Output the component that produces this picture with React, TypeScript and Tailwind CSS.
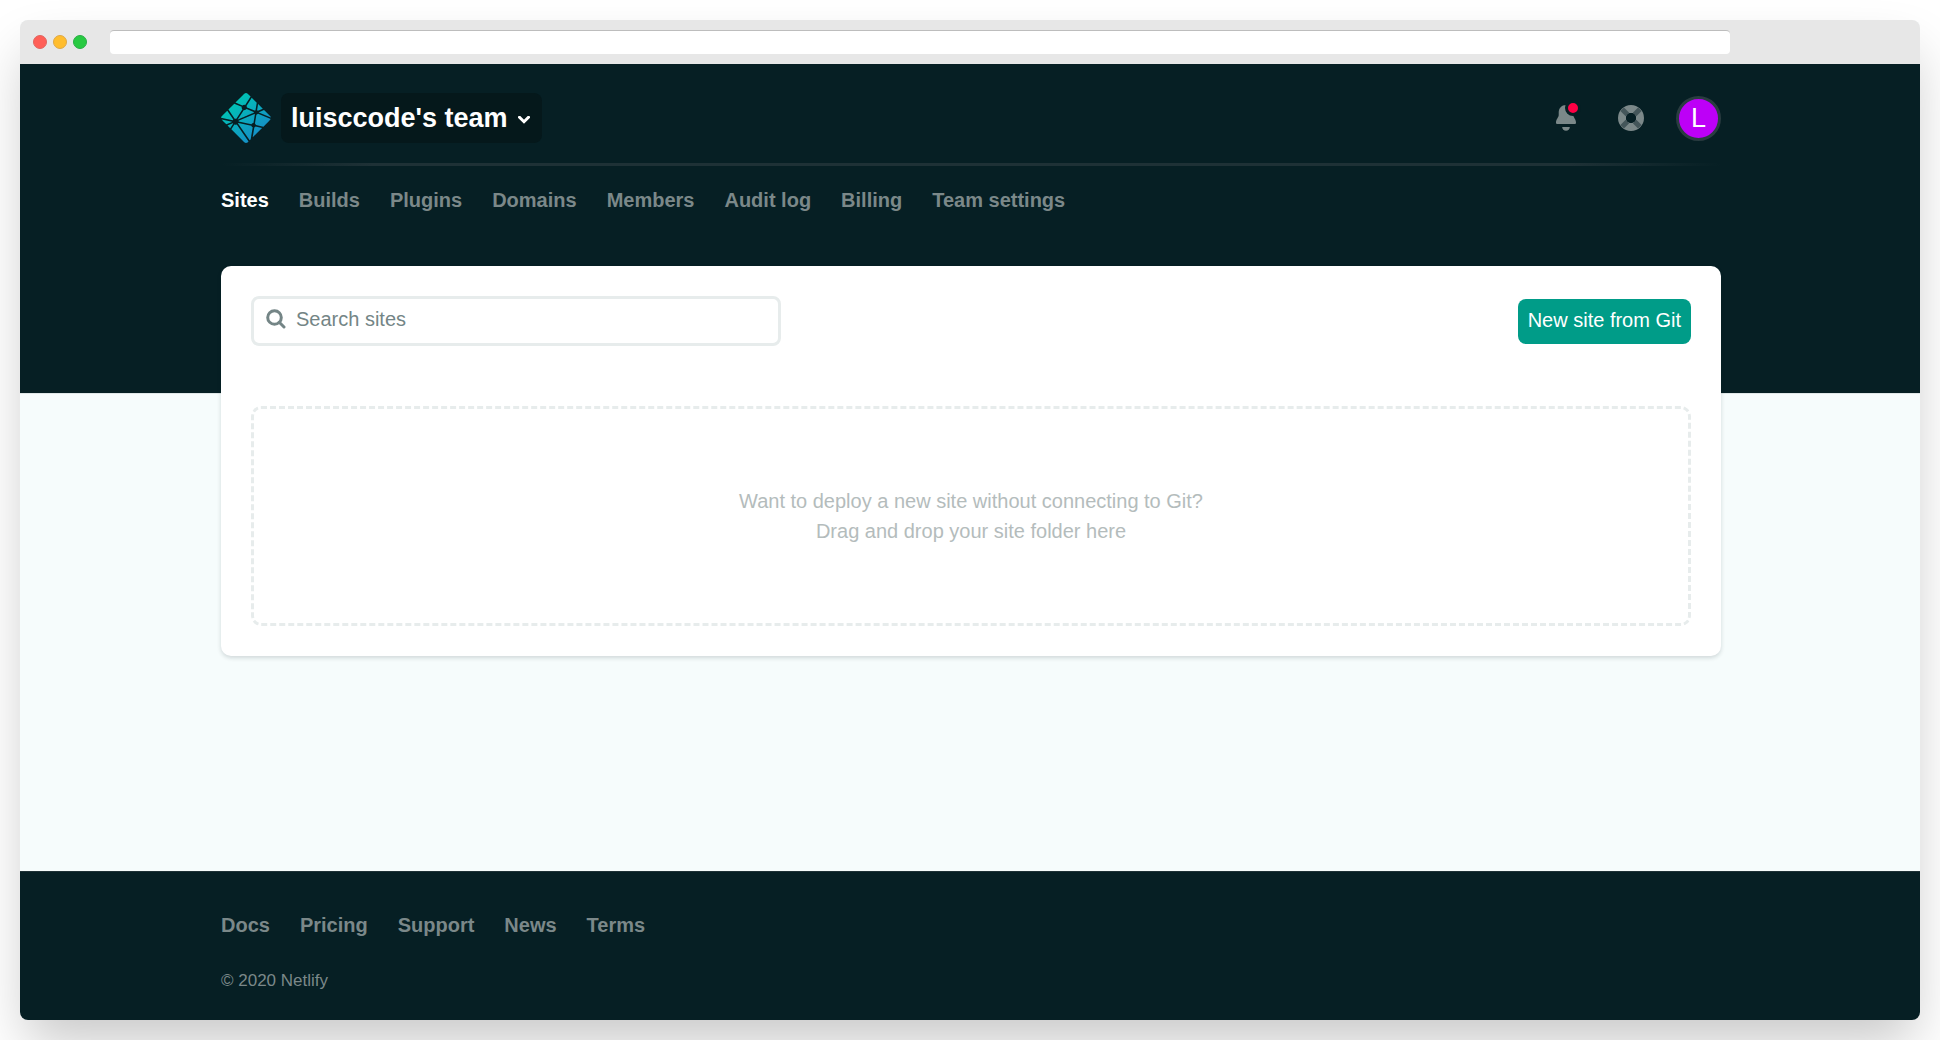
import React from "react";

const LOGO_PATH =
  "M28.589 14.135l-.014-.006c-.008-.003-.016-.006-.023-.013a.11.11 0 0 1-.028-.093l.773-4.726 3.625 3.626-3.77 1.604a.083.083 0 0 1-.033.006h-.015c-.005-.003-.01-.007-.02-.017a1.716 1.716 0 0 0-.495-.381zm5.258-.288l3.876 3.876c.805.806 1.208 1.208 1.355 1.674.022.069.04.138.054.209l-9.263-3.923a.728.728 0 0 0-.015-.006c-.037-.015-.08-.032-.08-.07 0-.038.044-.056.081-.071l.012-.005 3.98-1.684zm5.127 7.003c-.2.376-.59.766-1.25 1.427l-4.37 4.369-5.652-1.177-.03-.006c-.05-.008-.103-.017-.103-.062a1.706 1.706 0 0 0-.655-1.193c-.023-.023-.017-.059-.01-.092 0-.005 0-.01.002-.014l1.063-6.526.004-.022c.006-.05.015-.108.06-.108a1.73 1.73 0 0 0 1.16-.665c.009-.01.015-.021.027-.027.032-.015.07 0 .103.014l9.65 4.082zm-6.625 6.801l-7.186 7.186 1.23-7.56.002-.01c.001-.01.003-.02.006-.029.01-.024.036-.034.061-.044l.012-.005a1.85 1.85 0 0 0 .695-.517c.024-.028.053-.055.09-.06a.09.09 0 0 1 .029 0l5.06 1.04zm-8.707 8.707l-.81.81-8.955-12.942a.424.424 0 0 0-.01-.014c-.014-.019-.029-.038-.026-.06.001-.016.011-.03.022-.042l.01-.013c.027-.04.05-.08.075-.123l.02-.035.003-.003c.014-.024.027-.047.051-.06.021-.01.05-.006.073-.001l9.921 2.046a.164.164 0 0 1 .076.033c.013.013.016.027.019.043a1.757 1.757 0 0 0 1.028 1.175c.028.014.016.045.003.078a.238.238 0 0 0-.015.045c-.125.76-1.197 7.298-1.485 9.063zm-1.692 1.691c-.597.591-.949.904-1.347 1.03a2 2 0 0 1-1.206 0c-.466-.148-.869-.55-1.674-1.356L8.73 28.73l2.349-3.643c.011-.018.022-.034.04-.047.025-.018.061-.01.091 0a2.434 2.434 0 0 0 1.638-.083c.027-.01.054-.017.075.002a.19.19 0 0 1 .028.032L21.95 38.05zM7.863 27.863L5.8 25.8l4.074-1.738a.084.084 0 0 1 .033-.007c.034 0 .054.034.072.065a2.91 2.91 0 0 0 .13.184l.013.016c.012.017.004.034-.008.05l-2.25 3.493zm-2.976-2.976l-2.61-2.61c-.444-.444-.766-.766-.99-1.043l7.936 1.646a.84.84 0 0 0 .03.005c.049.008.103.017.103.063 0 .05-.059.073-.109.092l-.023.01-4.337 1.837zM.831 19.892a2 2 0 0 1 .09-.495c.148-.466.55-.868 1.356-1.674l3.34-3.34a2175.525 2175.525 0 0 0 4.626 6.687c.027.036.057.076.026.106-.146.161-.292.337-.395.528a.16.16 0 0 1-.05.062c-.013.008-.027.005-.042.002H9.78L.831 19.891zm5.68-6.403l4.491-4.491c.422.185 1.958.834 3.332 1.414 1.04.44 1.988.84 2.286.97.03.012.057.024.07.054.008.018.004.041 0 .06a2.003 2.003 0 0 0 .523 1.828c.03.03 0 .073-.026.11l-.014.021-4.56 7.063c-.012.02-.023.037-.043.05-.024.015-.058.008-.086.001a2.274 2.274 0 0 0-.543-.074c-.164 0-.342.03-.522.063h-.001c-.02.003-.038.007-.054-.005a.21.21 0 0 1-.045-.051l-4.808-7.013zm5.398-5.398l5.814-5.814c.805-.805 1.208-1.208 1.674-1.355a2 2 0 0 1 1.206 0c.466.147.869.55 1.674 1.355l1.26 1.26-4.135 6.404a.155.155 0 0 1-.041.048c-.025.017-.06.01-.09 0a2.097 2.097 0 0 0-1.92.37c-.027.028-.067.012-.101-.003-.54-.235-4.74-2.01-5.341-2.265zm12.506-3.676l3.818 3.818-.92 5.698v.015a.135.135 0 0 1-.008.038c-.01.02-.03.024-.05.03a1.83 1.83 0 0 0-.548.273.154.154 0 0 0-.02.017c-.011.012-.022.023-.04.025a.114.114 0 0 1-.043-.007l-5.818-2.472-.011-.005c-.037-.015-.081-.033-.081-.071a2.198 2.198 0 0 0-.31-.915c-.028-.046-.059-.094-.035-.141l4.066-6.303zm-3.932 8.606l5.454 2.31c.03.014.063.027.076.058a.106.106 0 0 1 0 .057c-.016.08-.03.171-.03.263v.153c0 .038-.039.054-.075.069l-.011.004c-.864.369-12.13 5.173-12.147 5.173-.017 0-.035 0-.052-.017-.03-.03 0-.072.027-.11a.76.76 0 0 0 .014-.02l4.482-6.94.008-.012c.026-.042.056-.089.104-.089l.045.007c.102.014.192.027.283.027.68 0 1.31-.331 1.69-.897a.16.16 0 0 1 .034-.04c.027-.02.067-.01.098.004zm-6.246 9.185l12.28-5.237s.018 0 .035.017c.067.067.124.112.179.154l.027.017c.025.014.05.03.052.056 0 .01 0 .016-.002.025L25.756 23.7l-.004.026c-.007.05-.014.107-.061.107a1.729 1.729 0 0 0-1.373.847l-.005.008c-.014.023-.027.045-.05.057-.021.01-.048.006-.07.001l-9.793-2.02c-.01-.002-.152-.519-.163-.52z";

function Logo() {
  return (
    <svg className="size-[50px]" viewBox="0.8 0.8 38.4 38.4" aria-hidden="true">
      <defs>
        <linearGradient id="logo-fill" gradientUnits="userSpaceOnUse" x1="10" y1="8" x2="30" y2="30">
          <stop offset="0" stopColor="#00c2b5" />
          <stop offset="1" stopColor="#1492c6" />
        </linearGradient>
      </defs>
      <path d={LOGO_PATH} fill="url(#logo-fill)" />
    </svg>
  );
}

function ChevronIcon() {
  return (
    <svg className="mt-1 h-2 w-3" viewBox="0 0 12 8" fill="none" stroke="currentColor" strokeWidth="3" aria-hidden="true">
      <path d="M1.5 1.2 6 5.7l4.500-4.500" strokeLinecap="round" />
    </svg>
  );
}

function BellIcon() {
  return (
    <svg className="h-[26px] w-5" viewBox="0 0 20 26" fill="#7b8889" aria-hidden="true">
      <path d="M10 0C5.500 0 2.700 3.200 2.700 7.500V10C2.700 12.500 0 14 0 17.500 0 18.500.500 19 1.500 19h17c1 0 1.500-.500 1.500-1.500 0-3.500-2.700-5-2.700-7.500V7.500C17.300 3.200 14.500 0 10 0z" />
      <path d="M6.200 22h7.600c0 2.200-1.600 3.800-3.800 3.800S6.200 24.200 6.200 22z" />
    </svg>
  );
}

function HelpIcon() {
  return (
    <svg className="size-[26px]" viewBox="-13 -13 26 26" fill="none" aria-hidden="true">
      <circle r="9" stroke="#7b8889" strokeWidth="8" />
      <g stroke="#44565a" strokeWidth="5">
        <path d="M-8.800-8.800-3.600-3.600M8.800-8.800 3.600-3.600M-8.800 8.800-3.600 3.600M8.800 8.800 3.600 3.600" />
      </g>
      <circle r="5" fill="#061f24" />
    </svg>
  );
}

function SearchIcon() {
  return (
    <svg className="size-5 shrink-0" viewBox="0 0 20 20" fill="none" stroke="#748586" strokeWidth="3" aria-hidden="true">
      <circle cx="8.500" cy="8.500" r="6.800" />
      <path d="M13.300 13.300 18 18" strokeLinecap="round" />
    </svg>
  );
}

function Container({ className = "", children }: { className?: string; children: React.ReactNode }) {
  return (
    <div className="pl-0.5">
      <div className={"mx-auto w-full max-w-[1500px] " + className}>{children}</div>
    </div>
  );
}

const tabs = ["Sites", "Builds", "Plugins", "Domains", "Members", "Audit log", "Billing", "Team settings"];
const footerLinks = ["Docs", "Pricing", "Support", "News", "Terms"];

export default function App() {
  return (
    <div className="min-h-screen overflow-hidden bg-white p-5 font-['Liberation_Sans',Arial,sans-serif] text-xl leading-[30px]">
      <div className="flex min-h-[calc(100vh-40px)] flex-col overflow-hidden rounded-lg bg-[#f6fcfc] shadow-[0_28px_54px_-6px_rgba(0,0,0,0.22)]">
        <div className="flex h-11 items-center bg-[#e7e7e7] pr-[190px] pl-[13px]">
          <div className="mr-[23px] flex gap-1.5">
            <span className="size-3.5 rounded-full border border-[#e0655f] bg-[#ff5f57]" />
            <span className="size-3.5 rounded-full border border-[#dfa845] bg-[#ffbd2e]" />
            <span className="size-3.5 rounded-full border border-[#28ad45] bg-[#28ca42]" />
          </div>
          <input
            aria-label="Address"
            className="h-6 min-w-0 flex-1 rounded border-t border-[#bdbdbd] bg-white px-2 text-sm outline-none"
          />
        </div>

        <header className="border-b border-[#dfe7e7] bg-[#061f24] pb-[178px]">
          <Container className="pt-[29px]">
            <div className="flex items-center justify-between">
              <div className="flex items-center gap-2.5">
                <a href="#home" aria-label="Home">
                  <Logo />
                </a>
                <button className="flex h-[50px] items-center gap-2.5 rounded-lg bg-[#05181b] pr-3 pl-2.5 text-[27px] font-bold text-white">
                  luisccode's team
                  <ChevronIcon />
                </button>
              </div>
              <div className="flex items-center">
                <button className="relative mr-[42px]" aria-label="Notifications">
                  <BellIcon />
                  <span className="absolute -top-[5px] -right-[5px] size-4 rounded-full border-3 border-[#061f24] bg-[#ff0044]" />
                </button>
                <button className="mr-8" aria-label="Help">
                  <HelpIcon />
                </button>
                <button
                  aria-label="Account"
                  className="flex size-[45px] items-center justify-center rounded-full border-[3px] border-[#2a3c41] bg-[#bd00f7] text-[27px] text-white"
                >
                  L
                </button>
              </div>
            </div>
            <div className="mt-5 h-[3px] bg-[linear-gradient(to_right,transparent,#1e3136_10%,#1e3136_90%,transparent)]" />
            <nav className="mt-[19px] flex flex-wrap gap-x-[30px] font-bold text-[#7b8889]">
              {tabs.map((tab, i) => (
                <a key={tab} href={"#" + tab} className={i === 0 ? "text-white" : ""}>
                  {tab}
                </a>
              ))}
            </nav>
          </Container>
        </header>

        <main className="-mt-32 flex-1 pb-10">
          <Container>
            <section className="rounded-[10px] bg-white p-[30px] shadow-[0_2px_4px_rgba(14,30,37,0.16)]">
              <div className="flex items-center justify-between gap-5">
                <label className="flex h-[50px] w-[530px] items-center gap-2.5 rounded-lg border-[3px] border-[#e7ecec] px-3 pb-1">
                  <SearchIcon />
                  <input
                    type="search"
                    aria-label="Search sites"
                    placeholder="Search sites"
                    className="min-w-0 flex-1 outline-none placeholder:text-[#748586]"
                  />
                </label>
                <button className="h-[45px] rounded-lg bg-[#009c88] px-2.5 pb-0.5 text-white">New site from Git</button>
              </div>
              <div className="mt-[60px] flex h-[220px] items-center justify-center rounded-[10px] border-[3px] border-dashed border-[#e7ecec] text-center text-[#b4bcbc]">
                <p>
                  Want to deploy a new site without connecting to Git?
                  <br />
                  Drag and drop your site folder here
                </p>
              </div>
            </section>
          </Container>
        </main>

        <footer className="border-t border-[#1e3136] bg-[#061f24] pt-[38px] pb-6 text-[#7b8889]">
          <Container>
            <nav className="flex gap-[30px] font-bold">
              {footerLinks.map((link) => (
                <a key={link} href={"#" + link}>
                  {link}
                </a>
              ))}
            </nav>
            <p className="mt-[26px] text-[17px] leading-[30px]">© 2020 Netlify</p>
          </Container>
        </footer>
      </div>
    </div>
  );
}
